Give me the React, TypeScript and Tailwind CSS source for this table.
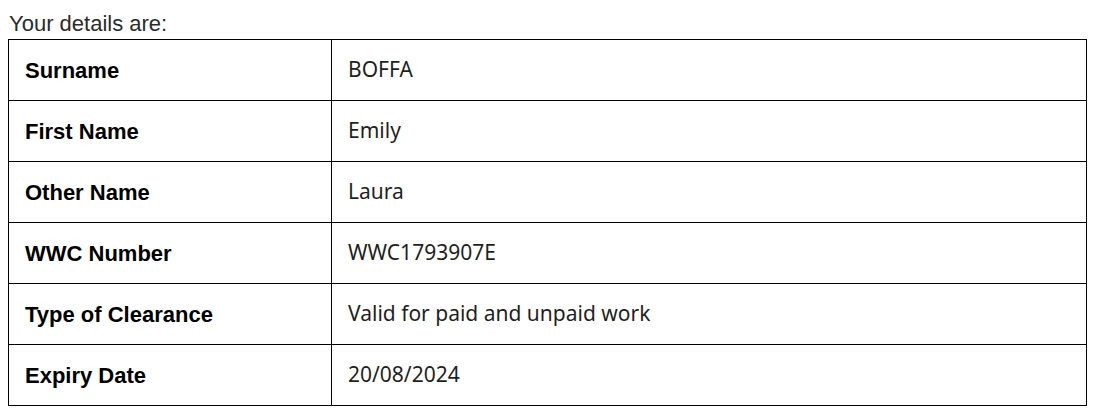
import React from 'react';

interface DetailRow {
  label: string;
  value: string;
}

const rows: DetailRow[] = [
  { label: 'Surname', value: 'BOFFA' },
  { label: 'First Name', value: 'Emily' },
  { label: 'Other Name', value: 'Laura' },
  { label: 'WWC Number', value: 'WWC1793907E' },
  { label: 'Type of Clearance', value: 'Valid for paid and unpaid work' },
  { label: 'Expiry Date', value: '20/08/2024' },
];

const App: React.FC = () => {
  return (
    <div className="w-[1101px] h-[417px] bg-white">
      <p className="pl-[9px] pt-[11px] text-[22px] leading-[26px] text-[#2b2b2b] font-['Liberation_Sans',Arial,sans-serif]">
        Your details are:
      </p>
      <table className="ml-[8px] mt-[2px] w-[1079px] border-collapse border border-black">
        <tbody>
          {rows.map(row => (
            <tr key={row.label} className="h-[61px]">
              <td className="w-[323px] border border-black pl-[16px] text-[22px] font-bold text-black font-['Liberation_Sans',Arial,sans-serif]">
                {row.label}
              </td>
              <td className="border border-black pl-[16px] text-[21px] text-[#1f1f1f] font-['Noto_Sans',sans-serif]">
                {row.value}
              </td>
            </tr>
          ))}
        </tbody>
      </table>
    </div>
  );
};

export default App;
